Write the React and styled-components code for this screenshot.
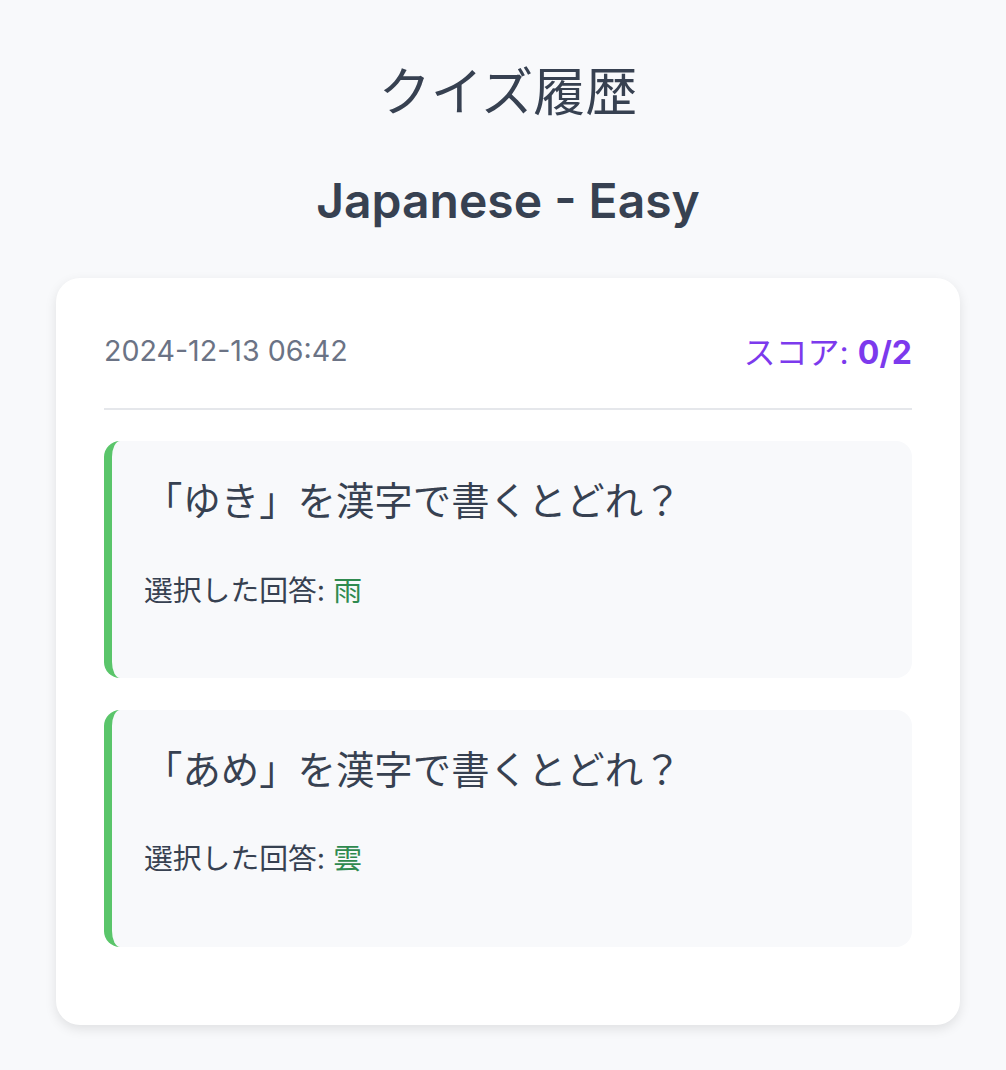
import React from 'react';
import styled, { createGlobalStyle } from 'styled-components';

const GlobalStyle = createGlobalStyle`
  body {
    margin: 0;
    background: #f8f9fb;
    font-family: Inter, "Noto Sans CJK JP", sans-serif;
    color: #374151;
  }
`;

const Page = styled.div`
  padding: 62px 46px 40px 56px;
`;

const Title = styled.h1`
  margin: 0 0 48px;
  font-size: 52px;
  line-height: 1.2;
  font-weight: 400;
  text-align: center;
  color: #374151;
`;

const Subtitle = styled.h2`
  margin: 0 0 48px;
  font-size: 48px;
  line-height: 1.2;
  font-weight: 600;
  text-align: center;
  color: #374151;
`;

const Card = styled.div`
  background: #fff;
  border-radius: 24px;
  padding: 48px 48px 46px;
  box-shadow: 0 4px 12px rgba(0, 0, 0, 0.1);
`;

const CardHeader = styled.div`
  display: flex;
  justify-content: space-between;
  align-items: center;
  height: 48px;
  padding-bottom: 34px;
  border-bottom: 2px solid #e5e7eb;
  margin-bottom: 31px;
`;

const Date = styled.span`
  font-size: 28.6px;
  color: #6b7385;
  margin-top: 2px;
`;

const Score = styled.span`
  font-size: 32px;
  color: #7c3aed;

  strong {
    font-weight: 700;
  }
`;

const Question = styled.div`
  background: #f8f9fb;
  border-left: 8px solid #5ac56a;
  border-radius: 16px;
  padding: 32px;
  margin-bottom: 32px;
`;

const QuestionText = styled.p`
  margin: 0 0 38px;
  font-size: 38.4px;
  line-height: 1.5;
  color: #374151;
`;

const Answer = styled.p`
  margin: 0 0 34px;
  font-size: 28.8px;
  line-height: 1.5;
  color: #374151;
`;

const Choice = styled.span`
  color: ${(p) => (p.$correct ? '#2f8a4f' : '#dc2626')};
`;

const history = [
  { q: '「ゆき」を漢字で書くとどれ？', a: '雨' },
  { q: '「あめ」を漢字で書くとどれ？', a: '雲' },
];

const App = () => {
  return (
    <>
      <GlobalStyle />
      <Page>
        <Title>クイズ履歴</Title>
        <Subtitle>Japanese - Easy</Subtitle>
        <Card>
          <CardHeader>
            <Date>2024-12-13 06:42</Date>
            <Score>
              スコア: <strong>0/2</strong>
            </Score>
          </CardHeader>
          {history.map((item) => (
            <Question key={item.q}>
              <QuestionText>{item.q}</QuestionText>
              <Answer>
                選択した回答: <Choice $correct>{item.a}</Choice>
              </Answer>
            </Question>
          ))}
        </Card>
      </Page>
    </>
  );
};

export default App;
